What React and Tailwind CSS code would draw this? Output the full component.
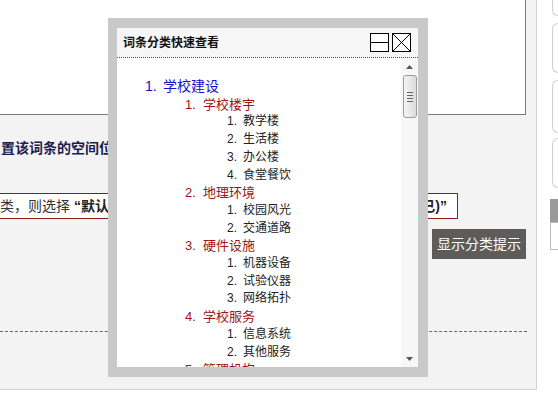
import React from "react";

const tree = [
  {
    t: "学校建设",
    c: [
      { t: "学校楼宇", c: ["教学楼", "生活楼", "办公楼", "食堂餐饮"] },
      { t: "地理环境", c: ["校园风光", "交通道路"] },
      { t: "硬件设施", c: ["机器设备", "试验仪器", "网络拓扑"] },
      { t: "学校服务", c: ["信息系统", "其他服务"] },
      { t: "管理机构", c: ["行政部门", "教学部门"] },
    ],
  },
];

function Scrollbar() {
  return (
    <div className="w-[17px] h-full bg-[#f7f7f7] flex flex-col items-center">
      <div className="h-[17px] w-full flex items-center justify-center">
        <svg width="7" height="4" viewBox="0 0 7 4">
          <path d="M0 4 L3.5 0 L7 4 Z" fill="#555" />
        </svg>
      </div>
      <div className="w-[14px] h-[43px] rounded-[3px] border border-[#9a9a9a] bg-gradient-to-r from-[#f4f4f4] to-[#dcdcdc] flex flex-col items-center justify-center gap-[2px]">
        <div className="w-[6px] h-px bg-[#666]" />
        <div className="w-[6px] h-px bg-[#666]" />
        <div className="w-[6px] h-px bg-[#666]" />
        <div className="w-[6px] h-px bg-[#666]" />
      </div>
      <div className="flex-1" />
      <div className="h-[17px] w-full flex items-center justify-center">
        <svg width="7" height="4" viewBox="0 0 7 4">
          <path d="M0 0 L3.5 4 L7 0 Z" fill="#555" />
        </svg>
      </div>
    </div>
  );
}

function Popup() {
  return (
    <div className="absolute left-[108px] top-[18px] w-[320px] h-[359px] bg-[#c9c9c9] pt-[10px] pb-[10px] pl-[9px] pr-[10px] flex flex-col">
      <div className="h-[30px] shrink-0 bg-[#f6f6f6] border-b border-dotted border-[#555] flex items-center pl-[6px] pr-[7px]">
        <span className="text-[12px] font-bold text-[#111] flex-1">词条分类快速查看</span>
        <div className="w-[19px] h-[19px] border border-black bg-white flex items-center">
          <div className="w-full h-px bg-black" />
        </div>
        <div className="w-[19px] h-[19px] border border-black bg-white ml-[3px]">
          <svg width="17" height="17" viewBox="0 0 17 17">
            <path d="M0 0 L17 17 M17 0 L0 17" stroke="#000" strokeWidth="1" />
          </svg>
        </div>
      </div>
      <div className="flex-1 flex bg-white overflow-hidden">
        <div className="flex-1 overflow-hidden pt-[20px] leading-[17.7px]">
          {tree.map((a, i) => (
            <div key={a.t}>
              <div className="pl-[28px] text-[14px] text-[#1010c8] whitespace-nowrap">
                <span className="inline-block w-[18px]">{i + 1}.</span>
                {a.t}
              </div>
              {a.c.map((b, j) => (
                <div key={b.t}>
                  <div className="pl-[68px] text-[13px] text-[#a01515] whitespace-nowrap">
                    <span className="inline-block w-[18px]">{j + 1}.</span>
                    {b.t}
                  </div>
                  {b.c.map((c, k) => (
                    <div key={c} className="pl-[110px] text-[12px] text-[#222] whitespace-nowrap">
                      <span className="inline-block w-[16px]">{k + 1}.</span>
                      {c}
                    </div>
                  ))}
                </div>
              ))}
            </div>
          ))}
        </div>
        <Scrollbar />
      </div>
    </div>
  );
}

function RightStrip() {
  return (
    <div className="w-[21px] h-full bg-white flex flex-col items-end overflow-hidden">
      <div className="w-[6px] h-[26px] -mt-[10px] border border-r-0 border-[#cfcfcf] rounded-l-[6px]" />
      <div className="w-[6px] h-[50px] mt-[7px] border border-r-0 border-[#cfcfcf] rounded-l-[6px]" />
      <div className="w-[6px] h-[53px] mt-[7px] border border-r-0 border-[#cfcfcf] rounded-l-[6px]" />
      <div className="w-[6px] h-[50px] mt-[5px] border border-r-0 border-[#cfcfcf] rounded-l-[6px]" />
      <div className="w-[8px] h-[23px] mt-[11px] bg-[#9a9a9a]" />
      <div className="w-[8px] h-[28px] border border-r-0 border-[#bbb] bg-white" />
    </div>
  );
}

export default function App() {
  return (
    <div className="relative w-[558px] h-[396px] overflow-hidden bg-white font-['Liberation_Sans','Noto_Sans_CJK_SC',sans-serif]">
      <div className="flex">
        <div className="w-[537px] h-[390px] bg-[#f3f3f3] border-r border-b border-[#d4d4d4] flex flex-col">
          <div className="w-[526px] h-[115px] bg-white border-r border-b border-[#7a7a7a]" />
          <div className="mt-[23px] pl-px text-[14px] leading-[20px] font-bold text-[#1e1e4e] whitespace-nowrap">
            置该词条的空间位置
          </div>
          <div className="mt-[35px] w-[458px] h-[26px] bg-white border border-l-0 border-[#8b1a1a] flex items-center justify-between pr-[10px] text-[14px] text-[#333] whitespace-nowrap overflow-hidden">
            <span>
              类，则选择 <b className="text-[#222]">“默认分类</b>
            </span>
            <b className="text-[#222]">已)”</b>
          </div>
          <div className="w-[526px] flex justify-end mt-[10px]">
            <div className="w-[94px] h-[30px] bg-[#5e5c5a] text-white text-[14px] flex items-center justify-center">
              显示分类提示
            </div>
          </div>
          <div className="mt-[72px] w-[527px] border-t border-dashed border-[#666]" />
        </div>
        <RightStrip />
      </div>
      <Popup />
    </div>
  );
}
